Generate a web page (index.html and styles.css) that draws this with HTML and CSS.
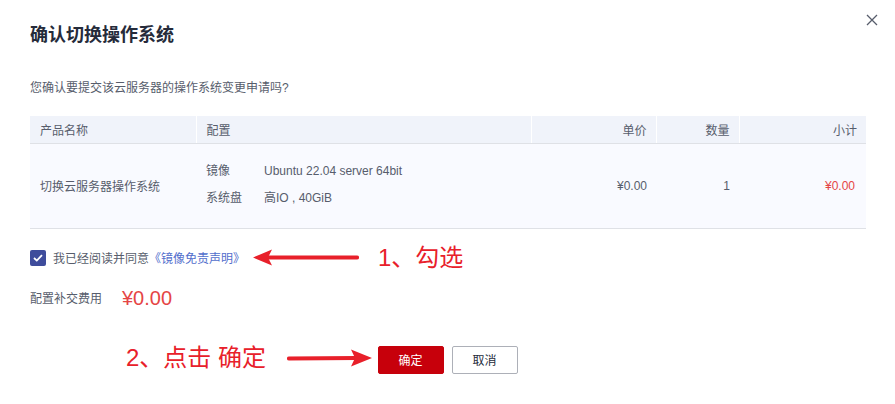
FILE: index.html
```html
<!DOCTYPE html>
<html lang="zh-CN">
<head>
<meta charset="utf-8">
<link rel="stylesheet" href="styles.css">
</head>
<body>
<div class="dialog">
  <div class="title">确认切换操作系统</div>
  <svg class="close" width="12" height="12" viewBox="0 0 12 12"><path d="M1 1L11 11M11 1L1 11" stroke="#575d6c" stroke-width="1.3" fill="none"/></svg>
  <div class="question">您确认要提交该云服务器的操作系统变更申请吗?</div>
  <table class="grid">
    <thead>
      <tr>
        <th class="c-name">产品名称</th>
        <th class="c-conf">配置</th>
        <th class="c-price r">单价</th>
        <th class="c-qty r">数量</th>
        <th class="c-sum r">小计</th>
      </tr>
    </thead>
    <tbody>
      <tr>
        <td>切换云服务器操作系统</td>
        <td>
          <div class="conf-row"><span class="conf-k">镜像</span><span>Ubuntu 22.04 server 64bit</span></div>
          <div class="conf-row"><span class="conf-k">系统盘</span><span>高IO , 40GiB</span></div>
        </td>
        <td class="r">¥0.00</td>
        <td class="r">1</td>
        <td class="r red">¥0.00</td>
      </tr>
    </tbody>
  </table>
  <div class="agree">
    <span class="cbox"><svg width="10" height="8" viewBox="0 0 10 8"><path d="M1 4L3.8 6.6L9 1.2" stroke="#fff" stroke-width="1.8" fill="none"/></svg></span>
    <span>我已经阅读并同意</span><span class="link">《镜像免责声明》</span>
    <div class="note note1">
      <svg class="arrow" width="106" height="20" viewBox="0 0 106 20"><path d="M104 9.5L16 9.5" stroke="#e8202a" stroke-width="4.2" stroke-linecap="round"/><path d="M0 9.5L19 1.5L15 9.5L19 17.5Z" fill="#e8202a"/></svg>
      <span class="note-text">1、勾选</span>
    </div>
  </div>
  <div class="fee">
    <span class="fee-label">配置补交费用</span>
    <span class="fee-val">¥0.00</span>
  </div>
  <div class="footer">
    <div class="note note2">
      <span class="note-text">2、点击 确定</span>
      <svg class="arrow" width="86" height="20" viewBox="0 0 86 20"><path d="M2 10.5L70 10" stroke="#e8202a" stroke-width="4.2" stroke-linecap="round"/><path d="M85 10L64 1.5L68 10L64 18.5Z" fill="#e8202a"/></svg>
    </div>
    <button class="btn primary">确定</button>
    <button class="btn">取消</button>
  </div>
</div>
</body>
</html>
```
FILE: styles.css
```css
html, body {
  margin: 0;
  padding: 0;
  background: #fff;
}
body {
  font-family: "Liberation Sans", "Noto Sans CJK SC", sans-serif;
  color: #575d6c;
  font-size: 12px;
}
.dialog {
  position: relative;
  width: 895px;
  height: 404px;
  box-sizing: border-box;
  padding: 22px 29px 0 30px;
}
.title {
  font-size: 18px;
  line-height: 27px;
  font-weight: bold;
  color: #252b3a;
}
.close {
  position: absolute;
  left: 866px;
  top: 14px;
}
.question {
  margin-top: 30px;
  line-height: 18px;
  color: #575d6c;
}
.grid {
  margin-top: 19px;
  width: 836px;
  border-collapse: collapse;
  table-layout: fixed;
}
.grid th {
  background: #f0f3fa;
  font-weight: normal;
  color: #575d6c;
  height: 27px;
  padding: 0 10px;
  text-align: left;
  border-left: 1px solid #fff;
  border-bottom: 1px solid #dfe1e6;
  box-sizing: border-box;
}
.grid th:first-child { border-left: none; }
.c-name { width: 166px; }
.c-conf { width: 335px; }
.c-price { width: 125px; }
.c-qty { width: 83px; }
.c-sum { width: 127px; }
.grid td {
  background: #f9faff;
  height: 85px;
  padding: 0 10px;
  border-bottom: 1px solid #dfe1e6;
  box-sizing: border-box;
  color: #575d6c;
}
.grid td.r, .grid th.r {
  text-align: right;
  padding-right: 9px;
}
.grid td.red { color: #e54545; padding-right: 11px; }
.conf-row {
  display: flex;
  line-height: 27px;
}
.conf-row:first-child { margin-top: -2px; }
.conf-k { width: 58px; }
.agree {
  position: relative;
  display: flex;
  align-items: center;
  margin-top: 20px;
  height: 18px;
}
.cbox {
  width: 16px;
  height: 16px;
  border-radius: 2px;
  background: #3e4c9c;
  display: flex;
  align-items: center;
  justify-content: center;
  margin-right: 7px;
}
.link { color: #526ecc; }
.fee {
  display: flex;
  align-items: center;
  margin-top: 21px;
  height: 20px;
}
.fee-label { width: 92px; }
.fee-val {
  color: #e54545;
  font-size: 20px;
  line-height: 20px;
}
.footer {
  position: relative;
  display: flex;
  justify-content: center;
  gap: 8px;
  margin-top: 38px;
  margin-left: -1px;
}
.btn {
  width: 66px;
  height: 28px;
  border: 1px solid #adb0b8;
  border-radius: 2px;
  background: #fff;
  color: #252b3a;
  font-family: "Liberation Sans", "Noto Sans CJK SC", sans-serif;
  font-size: 12px;
  padding: 0;
}
.btn.primary {
  background: #c7000b;
  border-color: #c7000b;
  color: #fff;
}
.note {
  position: absolute;
  display: flex;
  align-items: center;
}
.note-text {
  font-size: 24px;
  color: #e8202a;
  line-height: 30px;
  white-space: nowrap;
}
.note1 {
  left: 223px;
  top: -6px;
}
.note1 .arrow { margin-right: 19px; }
.note2 {
  left: 97px;
  top: -3px;
}
.note2 .note-text { margin-right: 21px; }
```
